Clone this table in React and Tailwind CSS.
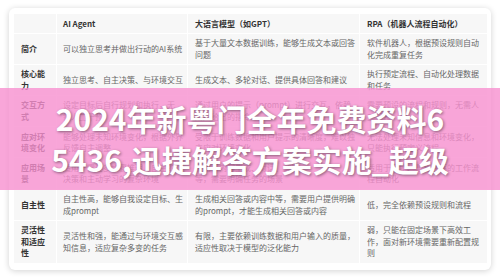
// App.jsx
const header = ['', 'AI Agent', '大语言模型（如GPT）', 'RPA（机器人流程自动化）'];

// each cell is a list of lines, broken where the screenshot breaks them
const rows = [
  [['简介'], ['可以独立思考并做出行动的AI系统'], ['基于大量文本数据训练，能够生成文本或回答', '问题'], ['软件机器人，根据预设规则自动', '化完成重复任务']],
  [['核心能', '力'], ['独立思考、自主决策、与环境交互'], ['生成文本、多轮对话、提供具体回答和建议'], ['执行预定流程、自动化处理数据', '和任务']],
  [['交互方', '式'], ['设定目标后自行规划和执行，无', '需人工干预'], ['通过用户的提示（prompt）进行交互，依赖', '用户给出的指令'], ['需要预设的流程和规则，无需人', '工干预']],
  [['应对环', '境变化'], ['能够处理未知环境变化，根据外界', '反馈自主调整'], ['受限于训练数据和用户提示的清晰度，难以独', '立应对环境变化'], ['无法处理未知信息和环境变化，', '只能执行预定义流程']],
  [['应用场', '景'], ['适用于需要多步骤推理、自主的', '决策和主动学习的复杂环境'], ['适用于内容生成、对话、翻译', '等，需要明确任务的场景'], ['适用于固定、重复性高的工作流', '程自动化']],
  [['自主性'], ['自主性高，能够自我设定目标、生', '成prompt'], ['生成相关回答或内容中等，需要用户提供明确', '的prompt，才能生成相关回答或内容'], ['低，完全依赖预设规则和流程']],
  [['灵活性', '和适应', '性'], ['灵活性和强，能通过与环境交互感', '知信息，适应复杂多变的任务'], ['有限，主要依赖训练数据和用户输入的质量，', '适应性取决于模型的泛化能力'], ['弱，只能在固定场景下高效工', '作，面对新环境需要重新配置规', '则']],
];

const cell = 'bg-[#f7f7f7] border border-white py-[3.5px] align-middle whitespace-nowrap overflow-hidden';
const pads = ['pl-[7px] pr-[5px]', 'pl-[6px] pr-[4px]', 'pl-[7px] pr-[4px]', 'pl-[7px] pr-[5px]'];

export default function App() {
  return (
    <div
      className="relative w-[500px] h-[278px] overflow-hidden bg-white"
      style={{ fontFamily: '"Noto Sans CJK SC", "Noto Sans", sans-serif' }}
    >
      <div className="pt-[8px] px-[9px]">
        <div className="bg-white rounded-md shadow-[0_1px_6px_rgba(0,0,0,0.18)] px-[4px] pt-[5px] pb-[6px]">
          <table className="w-[474px] table-fixed border-collapse text-[8px] leading-[11.6px] text-[#666]">
            <colgroup>
              <col className="w-[43px]" />
              <col className="w-[131px]" />
              <col className="w-[172px]" />
              <col className="w-[128px]" />
            </colgroup>
            <thead>
              <tr className="text-[#333] font-bold text-left">
                {header.map((h, i) => (
                  <th key={i} className={`${cell} ${pads[i]}`}>{h}</th>
                ))}
              </tr>
            </thead>
            <tbody>
              {rows.map((r, ri) => (
                <tr key={ri}>
                  {r.map((lines, ci) => (
                    <td key={ci} className={`${cell} ${pads[ci]} ${ci === 0 ? 'font-bold text-[#333]' : ''}`}>
                      {lines.map((l, li) => (
                        <div key={li}>{l}</div>
                      ))}
                    </td>
                  ))}
                </tr>
              ))}
            </tbody>
          </table>
        </div>
      </div>

      {/* pink banner over the table */}
      <div className="absolute left-0 right-0 top-[88px] h-[102px] bg-[rgba(248,144,208,0.8)] flex flex-col items-center justify-center">
        <p className="text-white font-bold text-[30px] leading-[41px] text-center [text-shadow:1px_1px_3px_rgba(0,0,0,0.45)]">
          2024年新粤门全年免费资料6
          <br />
          5436,迅捷解答方案实施_超级
        </p>
      </div>
    </div>
  );
}
